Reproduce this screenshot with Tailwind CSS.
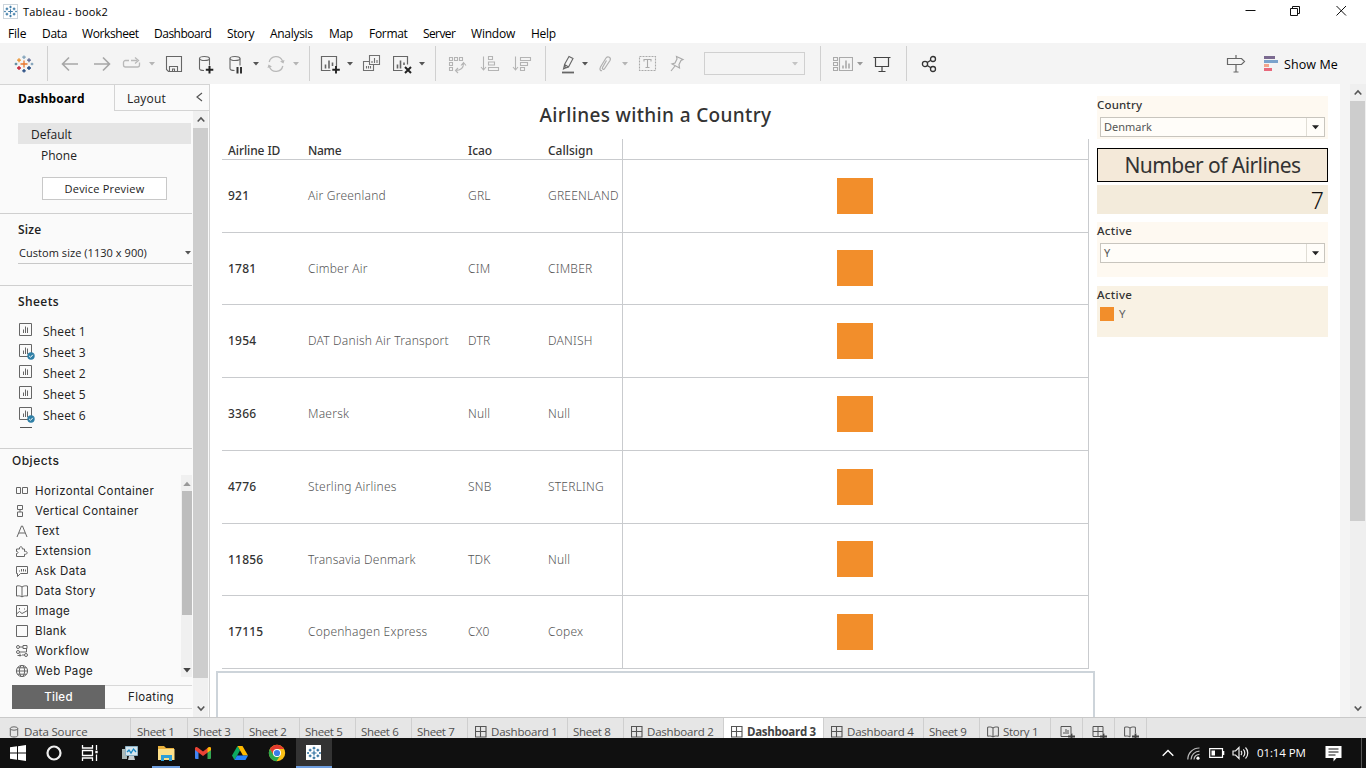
<!DOCTYPE html>
<html lang="en">
<head>
<meta charset="utf-8">
<title>Tableau - book2</title>
<script src="https://cdn.jsdelivr.net/npm/@tailwindcss/browser@4"></script>
</head>
<body class="w-[1366px] h-[768px] overflow-hidden bg-white font-['Open_Sans','Noto_Sans',sans-serif] text-black">
<svg class="hidden" xmlns="http://www.w3.org/2000/svg">
  <symbol id="tableau" viewBox="0 0 20 20"><path d="M10 6.5v7M6.500 10h7M10 1v4M8 3h4M10 15v4M8 17h4M4.500 4v4M2.500 6h4M15.500 4v4M13.500 6h4M4.500 12v4M2.500 14h4M15.500 12v4M13.500 14h4M1.500 8.700v2.600M.2 10h2.600M18.500 8.700v2.600M17.200 10h2.600" fill="none" stroke="currentColor" stroke-width="1.700"/></symbol>
  <symbol id="caret" viewBox="0 0 6 4"><path d="M0 0h6L3 3.500z" fill="currentColor"/></symbol>
  <symbol id="sheet" viewBox="0 0 16 16"><path d="M1.500 1.500h12v12h-12zM5.500 11V7.500M7.500 11V4.500M9.500 11V5.500" fill="none" stroke="#666" /></symbol>
  <symbol id="check" viewBox="0 0 8 8"><circle cx="4" cy="4" r="3.700" fill="#2f7fa6"/><path d="M2.200 4l1.300 1.300 2.300-2.500" fill="none" stroke="#fff"/></symbol>
  <symbol id="dash" viewBox="0 0 12 12"><path d="M.5.5h10.500v10.500H.5zM5.500.5V11M.5 5.500H11" fill="none" stroke="#555" stroke-width="1.100"/></symbol>
  <symbol id="book" viewBox="0 0 12 12"><path d="M.6 1.200C3 .7 4.700 1 6 2c1.300-1 3-1.300 5.400-.8v9C9 9.800 7.300 10 6 11c-1.300-1-3-1.200-5.400-.8zM6 2v9" fill="none" stroke="#555"/></symbol>
</svg>
<div class="flex h-full flex-col">
  <!-- title bar -->
  <header class="flex h-[22px] shrink-0 items-center">
    <div class="ml-[3px] flex size-[15px] items-center justify-center border border-[#ccd5dc] bg-white text-[#3f7ca8]"><svg class="size-[13px]"><use href="#tableau"/></svg></div>
    <span class="ml-[5px] pt-[2px] text-[11px] tracking-[0.2px]">Tableau - book2</span>
    <svg class="ml-auto mr-[18px] h-[20px] w-[104px]" viewBox="0 0 104 20" fill="none" stroke="#111"><path d="M1.500 9.500h10"/><path d="M46.500 7.500h7v7h-7zM48.500 7.500v-2h7v7h-2"/><path d="M92.500 5l9.500 9.500M102 5l-9.500 9.500"/></svg>
  </header>
  <nav class="flex h-[21px] shrink-0 items-center pt-[2px] text-[12px] leading-none whitespace-nowrap">
    <span class="ml-2 w-[34px] tracking-[-0.2px]">File</span><span class="w-[40px] tracking-[-0.3px]">Data</span><span class="w-[72px] tracking-[-0.4px]">Worksheet</span><span class="w-[73px] tracking-[-0.5px]">Dashboard</span><span class="w-[43px] tracking-[-0.4px]">Story</span><span class="w-[59px] tracking-[-0.3px]">Analysis</span><span class="w-[40px] tracking-[-0.3px]">Map</span><span class="w-[54px] tracking-[-0.3px]">Format</span><span class="w-[48px] tracking-[-0.6px]">Server</span><span class="w-[60px] tracking-[-0.2px]">Window</span><span class="tracking-[-0.3px]">Help</span>
  </nav>
  <!-- toolbar -->
  <div class="flex h-[41px] shrink-0 items-center bg-[#f4f4f4] text-[#555]">
    <svg class="ml-[14px] size-[20px]" viewBox="0 0 20 20" fill="none" stroke-width="1.300"><path d="M10 6.500v7M6.500 10h7" stroke="#e8762d"/><path d="M10 1.500v3.500M8.200 3.200h3.600M18 8.700v2.600M16.700 10h2.600" stroke="#7ea0b8"/><path d="M5 4.200v4M3 6.200h4" stroke="#eb912c"/><path d="M15 4.200v4M13 6.200h4" stroke="#5b6591"/><path d="M5 12v4M3 14h4" stroke="#c72035"/><path d="M15 12v4M13 14h4M10 15v3.500M8.200 16.800h3.600" stroke="#1f457e"/><path d="M2 8.700v2.600M.7 10h2.600" stroke="#59879b"/></svg>
    <i class="ml-[13px] h-[35px] w-px bg-[#d0d0d0]"></i>
    <svg class="ml-[12px] size-[20px]" viewBox="0 0 20 20" fill="none" stroke="#a6a6a6" stroke-width="1.600"><path d="M2.500 10H18M9 3.500L2.500 10 9 16.500"/></svg>
    <svg class="ml-[12px] size-[20px]" viewBox="0 0 20 20" fill="none" stroke="#a6a6a6" stroke-width="1.600"><path d="M2 10h15.500M11 3.500l6.500 6.500-6.500 6.500"/></svg>
    <svg class="ml-[10px] size-[20px]" viewBox="0 0 20 20" fill="none" stroke="#b9b9b9" stroke-width="1.300"><path d="M7 6.500H3.500a2 2 0 0 0-2 2V11a2 2 0 0 0 2 2h12a2 2 0 0 0 2-2V8.500M9 6.500h6"/><path d="M13 3.500l3.500 3-3.500 3"/></svg>
    <svg class="ml-[7px] h-[4px] w-[6px] text-[#b5b5b5]"><use href="#caret"/></svg>
    <svg class="ml-[9px] size-[20px]" viewBox="0 0 20 20" fill="none" stroke="#666" stroke-width="1.100"><path d="M2.500 2.500h15v15h-13l-2-2zM5.500 17.500v-5h8v5M8.500 17.500v-2.500h2v2.500"/></svg>
    <svg class="ml-[12px] size-[20px]" viewBox="0 0 20 20" fill="none" stroke="#666" stroke-width="1.100"><ellipse cx="8.500" cy="4.500" rx="5" ry="2"/><path d="M3.500 4.500v10c0 1.200 2 2 4.500 2M13.500 4.500v7"/><path d="M13.500 12v7.500M9.800 15.800h7.500" stroke="#222" stroke-width="2"/></svg>
    <svg class="ml-[11px] size-[20px]" viewBox="0 0 20 20" fill="none" stroke="#666" stroke-width="1.100"><ellipse cx="8" cy="4.500" rx="5" ry="2"/><path d="M3 4.500v10c0 1.200 2 2 4.500 2M13 4.500v7"/><path d="M10.500 13v6.500M14 13v6.500" stroke="#333" stroke-width="2"/></svg>
    <svg class="ml-[6px] h-[4px] w-[6px]"><use href="#caret"/></svg>
    <svg class="ml-[7px] size-[20px]" viewBox="0 0 20 20" fill="none" stroke="#b9b9b9" stroke-width="1.300"><path d="M3.200 8A7 7 0 0 1 16.500 7M16.800 12A7 7 0 0 1 3.500 13"/><path d="M14 7.500l3.500 2 1-3.500zM6 12.500l-3.500-2-1 3.500z" fill="#b9b9b9" stroke="none"/></svg>
    <svg class="ml-[7px] h-[4px] w-[6px] text-[#b5b5b5]"><use href="#caret"/></svg>
    <i class="ml-[10px] h-[35px] w-px bg-[#d0d0d0]"></i>
    <svg class="ml-[10px] size-[20px]" viewBox="0 0 20 20" fill="none" stroke="#666" stroke-width="1.200"><path d="M10.500 16.500h-9v-14h15v10"/><path d="M5.500 14.500v-4M9 14.500V6.500M12.500 12V8.500" stroke-width="1.600"/><path d="M16 12v7.500M12.300 15.800h7.500" stroke="#222" stroke-width="1.900"/></svg>
    <svg class="ml-[7px] h-[4px] w-[6px]"><use href="#caret"/></svg>
    <svg class="ml-[8px] size-[20px]" viewBox="0 0 20 20" fill="none" stroke="#707070" stroke-width="1.100"><path d="M8.500 1.500h10v9h-10zM8.500 7.500h-6v9h10v-6M11 9V7M13.500 9V4M16 9V6M5.500 14.500V12M7.500 14.500V12M9.500 14.500V12"/></svg>
    <svg class="ml-[12px] size-[20px]" viewBox="0 0 20 20" fill="none" stroke="#666" stroke-width="1.200"><path d="M9.500 16.500h-9v-14h14v8"/><path d="M4.500 14.500v-4M7.500 14.500V6.500M11 11V8.500" stroke-width="1.600"/><path d="M12 13l6 6M18 13l-6 6" stroke="#222" stroke-width="2"/></svg>
    <svg class="ml-[6px] h-[4px] w-[6px]"><use href="#caret"/></svg>
    <i class="ml-[10px] h-[35px] w-px bg-[#d0d0d0]"></i>
    <svg class="ml-[11px] size-[20px]" viewBox="0 0 20 20" fill="none" stroke="#b4b4b4" stroke-width="1.100"><path d="M2.500 3.500h3v3h-3zM7.500 3.500h3v3h-3zM12.500 3.500h3v3h-3zM2.500 8.500h3v3h-3zM2.500 13.500h3v3h-3zM8.500 16.500c5 0 8-2 8-7M14 11.500l2.500-3 2.500 3M11 14L8.500 16.500l2.500 2.500"/></svg>
    <svg class="ml-[13px] size-[20px]" viewBox="0 0 20 20" fill="none" stroke="#b4b4b4" stroke-width="1.100"><path d="M3.500 2.500V16M1 13l2.500 3L6 13M8.500 2.500h4v3h-4zM8.500 8h6v3h-6zM8.500 13.500h10v3h-10z"/></svg>
    <svg class="ml-[12px] size-[20px]" viewBox="0 0 20 20" fill="none" stroke="#b4b4b4" stroke-width="1.100"><path d="M3.500 2.500V16M1 13l2.500 3L6 13M8.500 3.500h10v3h-10zM8.500 8.500h7v3h-7zM8.500 13.500h4v3h-4z"/></svg>
    <i class="ml-[13px] h-[35px] w-px bg-[#d0d0d0]"></i>
    <svg class="ml-[12px] size-[20px]" viewBox="0 0 20 20" fill="none" stroke="#666" stroke-width="1.100"><path d="M6.500 10.500L11 2.500l4 2-4.500 8.500-3 1zM6.500 10.500l4 2.500M6.500 11l-1 4 3-1.500"/><path d="M4 18.500h12" stroke-width="1.800"/></svg>
    <svg class="ml-[4px] h-[4px] w-[6px]"><use href="#caret"/></svg>
    <svg class="ml-[7px] size-[20px]" viewBox="0 0 20 20" fill="none" stroke="#b0b0b0" stroke-width="1.200"><path d="M11.500 6.500l-4 7c-.8 1.500 1.200 2.500 2 1.200L15 6.500c1.500-3-2-5-4-2.500L5.500 13c-1.500 3 .5 4 1.500 3.500"/></svg>
    <svg class="ml-[7px] h-[4px] w-[6px] text-[#b5b5b5]"><use href="#caret"/></svg>
    <svg class="ml-[9px] size-[20px]" viewBox="0 0 20 20" fill="none" stroke="#aaa" stroke-width="1.100"><path d="M2.500 2.500h16v14h-16z" stroke-dasharray="2 1"/><path d="M7 7.500V5.500h7v2M10.500 5.500v8M8.500 13.500h4"/></svg>
    <svg class="ml-[10px] size-[20px]" viewBox="0 0 20 20" fill="none" stroke="#aaa" stroke-width="1.200"><path d="M9.500 2.500l6.500 3-2 1-2 4 .5 3.500-7.500-4 3-1 2-4zM8 12l-4 5"/></svg>
    <div class="ml-[17px] flex h-[23px] w-[101px] items-center justify-end border border-[#d0d0d0] pr-[6px] text-[#c4c4c4]"><svg class="h-[4px] w-[6px]"><use href="#caret"/></svg></div>
    <i class="ml-[15px] h-[35px] w-px bg-[#d0d0d0]"></i>
    <svg class="ml-[12px] h-[20px] w-[20px]" viewBox="0 0 20 20" fill="none" stroke="#aaa" stroke-width="1.100"><path d="M.5 3.500h4v3h-4zM.5 8.500h4v3h-4zM.5 13.500h4v3h-4zM6.500 3.500h13v13h-13z"/><path d="M10 14.500v-3M13 14.500v-8M16 14.500v-5" stroke-width="1.600"/></svg>
    <svg class="ml-[4px] h-[4px] w-[6px] text-[#999]"><use href="#caret"/></svg>
    <svg class="ml-[9px] size-[20px]" viewBox="0 0 20 20" fill="none" stroke="#444" stroke-width="1.200"><path d="M1.500 3.500h17M3.500 3.500v9h13v-9M10 12.500v5M6.500 17.500h7"/></svg>
    <i class="ml-[14px] h-[35px] w-px bg-[#d0d0d0]"></i>
    <svg class="ml-[12px] size-[20px]" viewBox="0 0 20 20" fill="none" stroke="#333" stroke-width="1.300"><circle cx="6" cy="10" r="2.600"/><circle cx="14" cy="5" r="2.500"/><circle cx="14" cy="15" r="2.500"/><path d="M8.300 8.500l3.500-2.200M8.300 11.500l3.500 2.200"/></svg>
    <svg class="ml-[287px] size-[20px]" viewBox="0 0 20 20" fill="none" stroke="#666" stroke-width="1.200"><path d="M1.500 4.500h14l3 3-3 3h-14zM10 1v3.500M10 10.500v7.500M7.500 18h5"/></svg>
    <svg class="ml-[18px] h-[16px] w-[14px]" viewBox="0 0 14 16"><path fill="#7b6a90" d="M0 0h11v3H0z"/><path fill="#7ba3cc" d="M0 4h14v3H0z"/><path fill="#f2a58c" d="M0 8h5v3H0z"/><path fill="#e8697c" d="M0 12h8v3H0z"/></svg>
    <span class="ml-[6px] pt-[3px] text-[12.500px] tracking-[0.1px] whitespace-nowrap text-black">Show Me</span>
  </div>

  <main class="flex h-[633px] shrink-0">
    <!-- side pane -->
    <aside class="flex w-[210px] shrink-0 flex-col border-t border-r border-[#d4d4d4] bg-[#fafafa] text-[12px] text-[#222]">
      <div class="flex h-[26px] shrink-0">
        <div class="w-[114px] pt-[5px] pl-[18px] text-[12px] leading-[18px] font-bold tracking-[0.15px] text-black">Dashboard</div>
        <div class="flex grow items-center justify-between border-b border-l border-[#d4d4d4] pr-[6px] pl-[12px]"><span class="pt-[2px] tracking-[0.2px]">Layout</span>
          <svg class="mb-[2px] h-[10px] w-[7px]" viewBox="0 0 7 10" fill="none" stroke="#555" stroke-width="1.200"><path d="M6 1L1 5l5 4"/></svg></div>
      </div>
      <div class="flex min-h-0 grow">
        <div class="flex w-[192px] shrink-0 flex-col">
          <div class="mt-[12px] ml-[18px] h-[21px] w-[173px] bg-[#e5e5e5] pl-[13px] leading-[23px] tracking-[0px]">Default</div>
          <div class="mt-[1px] h-[21px] pl-[41px] leading-[22px] tracking-[0px]">Phone</div>
          <div class="mt-[11px] ml-[42px] h-[23px] w-[125px] border border-[#c8c8c8] bg-white text-center text-[11px] leading-[22px] tracking-[0.2px]">Device Preview</div>
          <div class="mt-[13px] h-[72px] border-t border-[#cfcfcf] pt-[7px] pl-[18px]">
            <div class="leading-[18px] font-semibold tracking-[0.2px]">Size</div>
            <div class="mt-[2px] flex h-[23px] items-center border-b border-[#c8c8c8] pr-px pl-px text-[11px] tracking-[0.05px]"><span class="grow pt-[2px]">Custom size (1130 x 900)</span><svg class="mt-[2px] h-[4px] w-[6px] text-[#555]"><use href="#caret"/></svg></div>
          </div>
          <div class="h-[163px] border-t border-[#cfcfcf] pt-[7px] pl-[18px]">
            <div class="mb-[10px] leading-[18px] font-semibold tracking-[0.4px]">Sheets</div>
            <div id="sheets"></div>
            <div class="mt-px ml-[2px] h-px w-[12px] bg-[#555]"></div>
          </div>
          <div class="border-t border-[#cfcfcf] pt-[3px]">
            <div class="pl-[12px] font-['Inter','Noto_Sans',sans-serif] leading-[18px] font-medium tracking-[0.5px]">Objects</div>
            <div class="mt-[5px] flex h-[202px] justify-between">
              <div id="objects" class="pt-[7px] pl-[15px]"></div>
              <div class="flex w-[11px] flex-col items-center bg-[#f0f0f0] pt-[6px] text-[#999]"><svg class="h-[5px] w-[8px] rotate-180"><use href="#caret"/></svg><div class="mt-[5px] h-[124px] w-[10px] self-end bg-[#bdbdbd]"></div><svg class="mt-auto mb-[4px] h-[5px] w-[8px] text-[#444]"><use href="#caret"/></svg></div>
            </div>
            <div class="mt-[8px] ml-[12px] flex h-[24px] font-['Inter','Noto_Sans',sans-serif] text-[11.500px] leading-[25px] tracking-[0.3px]">
              <div class="w-[93px] bg-[#666] text-center font-medium text-white">Tiled</div>
              <div class="grow border-y border-[#d8d8d8] pl-[5px] text-center leading-[23px]">Floating</div>
            </div>
          </div>
        </div>
        <div class="ml-px flex w-[15px] flex-col items-center bg-[#f0f0f0]">
          <svg class="mt-[5px] h-[7px] w-[8px]" viewBox="0 0 8 6" fill="none" stroke="#555" stroke-width="1.600"><path d="M.7 5L4 1.500 7.300 5"/></svg>
          <div class="mt-[5px] h-[550px] w-full bg-[#cdcdcd]"></div>
          <svg class="mt-auto mb-[5px] h-[7px] w-[8px]" viewBox="0 0 8 6" fill="none" stroke="#555" stroke-width="1.600"><path d="M.7 1L4 4.500 7.300 1"/></svg>
        </div>
      </div>
    </aside>

    <!-- dashboard canvas -->
    <section class="flex w-[885px] shrink-0 flex-col">
      <h1 class="h-[55px] pt-[18px] pl-[6px] text-center font-['Noto_Sans',sans-serif] text-[19px] leading-[26px] font-medium tracking-[0.35px] text-[#333]">Airlines within a Country</h1>
      <div id="table" class="ml-[12px] w-[867px] border-r border-[#c9cbce] font-['Noto_Sans',sans-serif] text-[12px] text-[#333]">
        <div class="flex h-[21px] border-b border-[#c9cbce] leading-[24px] font-medium">
          <div class="w-[80px] pl-[6px] tracking-[-0.1px]">Airline ID</div><div class="w-[160px] pl-[6px] tracking-[-0.3px]">Name</div><div class="w-[80px] pl-[6px] tracking-[-0.1px]">Icao</div><div class="w-[80px] pl-[6px]">Callsign</div><div class="grow border-l border-[#c9cbce]"></div>
        </div>
      </div>
      <div class="mt-[2px] ml-[6px] grow border-2 border-b-0 border-[#cdd4da]"></div>
    </section>

    <section class="ml-[2px] w-[231px] shrink-0 pt-[12px] font-['Noto_Sans',sans-serif] text-[11.500px] text-[#333]">
      <div class="h-[43px] bg-[#fef9f1]">
        <div class="h-[21px] leading-[17px] font-medium tracking-[0.15px]">Country</div>
        <div class="ml-[3px] flex h-[20px] w-[225px] border border-[#c8c5be] bg-[#fffdf9] text-[11px] leading-[18px] text-[#555]"><span class="grow pl-[3px]">Denmark</span><span class="flex w-[18px] items-center justify-center border-l border-[#e0ddd5] text-[#222]"><svg class="h-[5px] w-[7px]"><use href="#caret"/></svg></span></div>
      </div>
      <div class="mt-[9px] h-[34px] border border-black bg-[#f4e9d9] text-center text-[21px] leading-[32px] tracking-[-0.55px]">Number of Airlines</div>
      <div class="mt-[3px] h-[29px] bg-[#f3ebdb] pr-[4px] text-right text-[23px] leading-[31px] font-light text-[#111]">7</div>
      <div class="mt-[8px] h-[55px] bg-[#fef9f1]">
        <div class="h-[21px] leading-[17px] font-medium tracking-[0.3px]">Active</div>
        <div class="ml-[3px] flex h-[20px] w-[225px] border border-[#c8c5be] bg-[#fffdf9] text-[11px] leading-[18px] text-[#555]"><span class="grow pl-[3px]">Y</span><span class="flex w-[18px] items-center justify-center border-l border-[#e0ddd5] text-[#222]"><svg class="h-[5px] w-[7px]"><use href="#caret"/></svg></span></div>
      </div>
      <div class="mt-[9px] h-[51px] bg-[#f9f2e4]">
        <div class="h-[20px] leading-[18px] font-medium tracking-[0.3px]">Active</div>
        <div class="flex items-center pl-[3px] text-[#666]"><i class="size-[14px] bg-[#f28e2b]"></i><span class="ml-[5px] leading-[16px]">Y</span></div>
      </div>
    </section>
    <div class="ml-[12px] w-[10px] bg-[#f4f4f4]"></div>
    <div class="flex w-[16px] flex-col items-center bg-[#efefef]">
      <svg class="mt-[5px] h-[7px] w-[8px]" viewBox="0 0 8 6" fill="none" stroke="#555" stroke-width="1.600"><path d="M.7 5L4 1.500 7.300 5"/></svg>
      <div class="mt-[5px] h-[420px] w-[15px] self-start bg-[#cdcdcd]"></div>
      <svg class="mt-auto mb-[5px] h-[7px] w-[8px]" viewBox="0 0 8 6" fill="none" stroke="#555" stroke-width="1.600"><path d="M.7 1L4 4.500 7.300 1"/></svg>
    </div>
  </main>

  <!-- sheet tabs -->
  <div id="tabs" class="flex h-[21px] shrink-0 border-t border-[#c9c9c9] bg-[#e6e6e6] text-[11.500px] leading-[12px] whitespace-nowrap text-[#505050]"></div>

  <!-- taskbar -->
  <footer class="z-10 flex h-[30px] shrink-0 items-center bg-[#101010] text-white">
    <svg class="ml-[10px] size-[16px]" viewBox="0 0 16 16" fill="#fff"><path d="M0 2.300L7 1.300v6.200H0zM8 1.200L16 0v7.500H8zM0 8.500h7v6.200l-7-1zM8 8.500h8V16l-8-1.200z"/></svg>
    <svg class="ml-[20px] size-[16px]" viewBox="0 0 16 16"><circle cx="8" cy="8" r="6.500" fill="none" stroke="#eee" stroke-width="2.200"/></svg>
    <svg class="ml-[19px] size-[18px]" viewBox="0 0 18 18" fill="none" stroke="#fff" stroke-width="1.300"><path d="M1.500 1v3h10V1M1.500 6.500h10v5h-10zM1.500 17v-3h10v3M15.500 1v5M15.500 10.500V17"/><path d="M14.300 8h2.400" stroke-width="2.500"/></svg>
    <svg class="ml-[22px] size-[18px]" viewBox="0 0 18 18"><path fill="#a9b7b5" d="M1 5h5v10H1z"/><path fill="#d6e6ee" stroke="#8cb1c4" d="M4.500 2.500h12v9h-12z"/><path d="M6 8l2-2 2 3 2.500-4L15 8" fill="none" stroke="#1687c5" stroke-width="1.300"/><path fill="#c6ced1" d="M8 12h5l1 4H7z"/></svg>
    <div class="ml-[13px] flex h-full w-[28px] items-center justify-center border-b-2 border-[#6f9fe0] pt-[2px]"><svg class="size-[17px]" viewBox="0 0 17 17"><path fill="#e9b03c" d="M0 1h6l2 2h8v12H0z"/><path fill="#fde08a" d="M0 4h16.500v11H0z"/><path fill="#2f9fd8" d="M3 10h11v6h-3v-3H6v3H3z"/></svg></div>
    <svg class="ml-[15px] h-[12px] w-[16px]" viewBox="0 0 16 12"><path fill="#4285f4" d="M0 2l3.500 2.500V12H1a1 1 0 0 1-1-1z"/><path fill="#34a853" d="M16 2l-3.500 2.500V12H15a1 1 0 0 0 1-1z"/><path fill="#ea4335" d="M0 1.500C0 0 1.500-.5 2.700.5L8 4.500l5.300-4C14.500-.5 16 0 16 1.500V3L8 9 0 3z"/><path fill="#fbbc04" d="M12.500 1.100l.8-.6C14.500-.5 16 0 16 1.500V3l-3.500 2.600z"/></svg>
    <svg class="ml-[21px] h-[14px] w-[16px]" viewBox="0 0 16 14"><path fill="#0da960" d="M5.500 0L0 9.500 2.500 14 8 4.500z"/><path fill="#ffba00" d="M5.500 0h5L16 9.500h-5z"/><path fill="#2684fc" d="M5 9.500h11L13.500 14h-11z"/></svg>
    <svg class="ml-[20px] size-[18px]" viewBox="0 0 18 18"><circle cx="9" cy="9" r="8.200" fill="#fbc116"/><path fill="#e33b2e" d="M1.900 4.900A8.200 8.200 0 0 1 16.100 4.900L9 5 5.500 11z"/><path fill="#2da94f" d="M1.900 4.900A8.200 8.200 0 0 0 8.500 17.200l4-6.200L9 13l-3.500-2z"/><circle cx="9" cy="9" r="4" fill="#fff"/><circle cx="9" cy="9" r="3.100" fill="#3b7de9"/></svg>
    <div class="ml-[10px] flex h-full w-[36px] items-center justify-center border-b-2 border-[#6f9fe0] bg-[#333] pt-[1px]"><div class="mr-px flex size-[15px] items-center justify-center bg-white text-[#2b6f9e]"><svg class="size-[14px]"><use href="#tableau"/></svg></div></div>
    <svg class="ml-auto h-[8px] w-[12px]" viewBox="0 0 12 8" fill="none" stroke="#fff" stroke-width="1.400"><path d="M.7 6.800L6 1.500l5.300 5.300"/></svg>
    <svg class="ml-[13px] size-[13px]" viewBox="0 0 13 13" fill="none" stroke="#bbb" stroke-width="1.200"><path d="M.8 12.500A11.500 11.500 0 0 1 12.500 1M4 12.500A8.500 8.500 0 0 1 12.500 4.200M7 12.500A5.500 5.500 0 0 1 12.500 7.300"/><circle cx="11" cy="11.200" r="1.600" fill="#fff" stroke="none"/></svg>
    <svg class="ml-[9px] h-[10px] w-[16px]" viewBox="0 0 16 10"><path d="M.7.7h12.800v8.600H.7z" fill="none" stroke="#fff" stroke-width="1.200"/><path fill="#fff" d="M2.500 2.500H6v5H2.500zM14 3h1.300v4H14z"/></svg>
    <svg class="ml-[7px] h-[14px] w-[17px]" viewBox="0 0 17 14" fill="none" stroke="#eee" stroke-width="1.200"><path d="M1 5h2.500L7 1.500v11L3.500 9H1zM9 5c1 1 1 3 0 4M11.300 3.300c2 2 2 5.400 0 7.400M13.500 1.500c3 3 3 8 0 11"/></svg>
    <span class="ml-[8px] w-[52px] text-[11.500px] tracking-[-0.1px] whitespace-nowrap">01:14 PM</span>
    <svg class="ml-[16px] h-[17px] w-[17px]" viewBox="0 0 17 17"><path fill="#fff" d="M.5 1h16v12h-5l-3 3.500V13h-8z"/><path d="M3.500 4h10M3.500 7h10M3.500 10h7" stroke="#111" stroke-width="1.200"/></svg>
    <i class="mr-[4px] ml-[19px] h-full w-px bg-[#555]"></i>
  </footer>
</div>
<script>
const byId = id => document.getElementById(id);
byId('sheets').innerHTML = [['Sheet 1',0],['Sheet 3',1],['Sheet 2',0],['Sheet 5',0],['Sheet 6',1]].map(([n,used]) =>
  `<div class="flex h-[21px] items-center"><span class="relative mb-[3px] size-[16px]"><svg class="size-[16px]"><use href="#sheet"/></svg>${used ? '<svg class="absolute right-[-1px] bottom-[-1px] size-[8px]"><use href="#check"/></svg>' : ''}</span><span class="ml-[9px] tracking-[0.15px] leading-[24px]">${n}</span></div>`).join('');

const icons = [
 '<path d="M1.500 3.500h4v6h-4zM7.500 3.500h5v6h-5z"/>',
 '<path d="M2.500 1.500h5v4h-5zM2.500 8h5v4.500h-5zM5 5.500V8"/>',
 '<path d="M2 13L6.500 2h1L12 13M4 9h6"/>',
 '<path d="M1.500 12.500v-3c2 .5 2-2.500 0-2V5h3c-.7-3 3.500-3 2.800 0h2.200v2.500c3.500-1 3.500 3.500 0 2.700v2.300z"/>',
 '<path d="M1.500 2.500h11v7h-7l-3 3v-3h-1zM4.500 7.500v-1M6.500 7.500V5M8.500 7.500V5M10.500 7.500v-2"/>',
 '<path d="M1.500 2C4 1.500 5.700 2 7 3c1.300-1 3-1.500 5.500-1v10c-2.500-.4-4.200 0-5.500.9-1.300-.9-3-1.300-5.500-.9zM7 3v10"/>',
 '<path d="M1.500 1.500h11v11h-11zM1.500 10l3-2.500 2.500 2 5.500-3M4.500 4v1.500M9 5h1"/>',
 '<path d="M1.500 1.500h11v11h-11z"/>',
 '<circle cx="3" cy="3" r="1.500"/><circle cx="11" cy="11" r="1.500"/><circle cx="3" cy="8" r="1.500"/><path d="M4.500 3H8M8 1.500h4v3H8zM4.500 8h7V5M5 12.500V9.500M2.500 11.500h4M9.500 11H7"/>',
 '<circle cx="7" cy="7" r="5.600"/><ellipse cx="7" cy="7" rx="2.600" ry="5.600"/><path d="M1.400 7h11.200M2.500 3.800h9M2.500 10.200h9"/>'];
byId('objects').innerHTML = ['Horizontal Container','Vertical Container','Text','Extension','Ask Data','Data Story','Image','Blank','Workflow','Web Page'].map((n,i) =>
  `<div class="flex h-[20px] items-center font-['Inter','Noto_Sans',sans-serif] text-[11.500px] whitespace-nowrap"><svg class="mb-[2px] size-[14px]" viewBox="0 0 14 14" fill="none" stroke="#666">${icons[i]}</svg><span class="ml-[6px] tracking-[0.36px]">${n}</span></div>`).join('');

const tall = ['h-[73px]', 'pt-[18px]'], short = ['h-[72px]', 'pt-[17px]'];
const sizes = [tall, short, tall, tall, tall, short, tall];
byId('table').insertAdjacentHTML('beforeend', [
 ['921','Air Greenland','GRL','GREENLAND'],['1781','Cimber Air','CIM','CIMBER'],['1954','DAT Danish Air Transport','DTR','DANISH'],['3366','Maersk','Null','Null'],['4776','Sterling Airlines','SNB','STERLING'],['11856','Transavia Denmark','TDK','Null'],['17115','Copenhagen Express','CX0','Copex']
].map((r,i) => `<div class="flex ${sizes[i][0]} items-center border-b border-[#c9cbce] font-light tracking-[0.22px] whitespace-nowrap text-[#555]"><div class="w-[80px] pl-[6px] font-medium text-[#333]">${r[0]}</div><div class="w-[160px] pl-[6px]">${r[1]}</div><div class="w-[80px] pl-[6px]">${r[2]}</div><div class="w-[80px] pl-[6px]">${r[3]}</div><div class="flex h-full grow justify-center border-l border-[#c9cbce] pr-px ${sizes[i][1]}"><i class="size-[36px] bg-[#f28e2b]"></i></div></div>`).join(''));

const dash = '<svg class="mt-[8px] mr-[4px] size-[12px] shrink-0"><use href="#dash"/></svg>';
const book = '<svg class="mt-[8px] mr-[4px] size-[12px] shrink-0"><use href="#book"/></svg>';
const db = '<svg class="mt-[8px] mr-[5px] h-[12px] w-[10px] shrink-0" viewBox="0 0 10 12" fill="none" stroke="#666"><ellipse cx="5" cy="2.500" rx="3.700" ry="1.700"/><path d="M1.300 2.500v7c0 2 7.400 2 7.400 0v-7"/></svg>';
const plus = '<path d="M11.500 7.500v5.500M8 10.500h7" stroke="#444" stroke-width="1.800"/>';
const add = [
 '<path d="M1 .5h10v7M8 10.500H1V.5M4 8V6M6 8V3M8 8V4"/>',
 '<path d="M8 10.500H1V.5h10v7M6 .5v10M1 5.500h10"/>',
 '<path d="M.6 1.200C3 .7 4.700 1 6 2c1.300-1 3-1.300 5.400-.8v6M6 11c-1.300-1-3-1.200-5.400-.8v-9M6 2v9"/>'];
byId('tabs').innerHTML = [
 ['Data Source','w-[131px] pl-[9px]',db,'tracking-[-0.15px]'],['Sheet 1','w-[57px] pl-[6px]','','tracking-[-0.35px]'],['Sheet 3','w-[56px] pl-[5px]','','tracking-[-0.35px]'],['Sheet 2','w-[56px] pl-[5px]','','tracking-[-0.35px]'],['Sheet 5','w-[56px] pl-[5px]','','tracking-[-0.35px]'],['Sheet 6','w-[56px] pl-[5px]','','tracking-[-0.35px]'],['Sheet 7','w-[56px] pl-[5px]','','tracking-[-0.35px]'],
 ['Dashboard 1','w-[100px] pl-[7px]',dash,'tracking-[-0.2px]'],['Sheet 8','w-[56px] pl-[5px]','','tracking-[-0.35px]'],['Dashboard 2','w-[100px] pl-[7px]',dash,'tracking-[-0.2px]'],['Dashboard 3','w-[100px] pl-[7px] bg-white',dash,'font-bold text-[#444] tracking-[-0.3px]'],['Dashboard 4','w-[100px] pl-[7px]',dash,'tracking-[-0.2px]'],['Sheet 9','w-[56px] pl-[5px]','','tracking-[-0.35px]'],['Story 1','w-[71px] pl-[7px]',book,'tracking-[-0.3px]']
].map(([n,c,ic,t]) => `<div class="flex shrink-0 border-r border-[#cfcfcf] ${c}">${ic}<span class="h-[12px] mt-[8px] ${t}">${n}</span></div>`).join('') +
add.map(p => `<div class="flex w-[32px] shrink-0 border-r border-[#cfcfcf] pl-[9px]"><svg class="mt-[8px] h-[12px] w-[15px]" viewBox="0 0 15 12" fill="none" stroke="#555">${p}${plus}</svg></div>`).join('');
</script>
</body>
</html>
